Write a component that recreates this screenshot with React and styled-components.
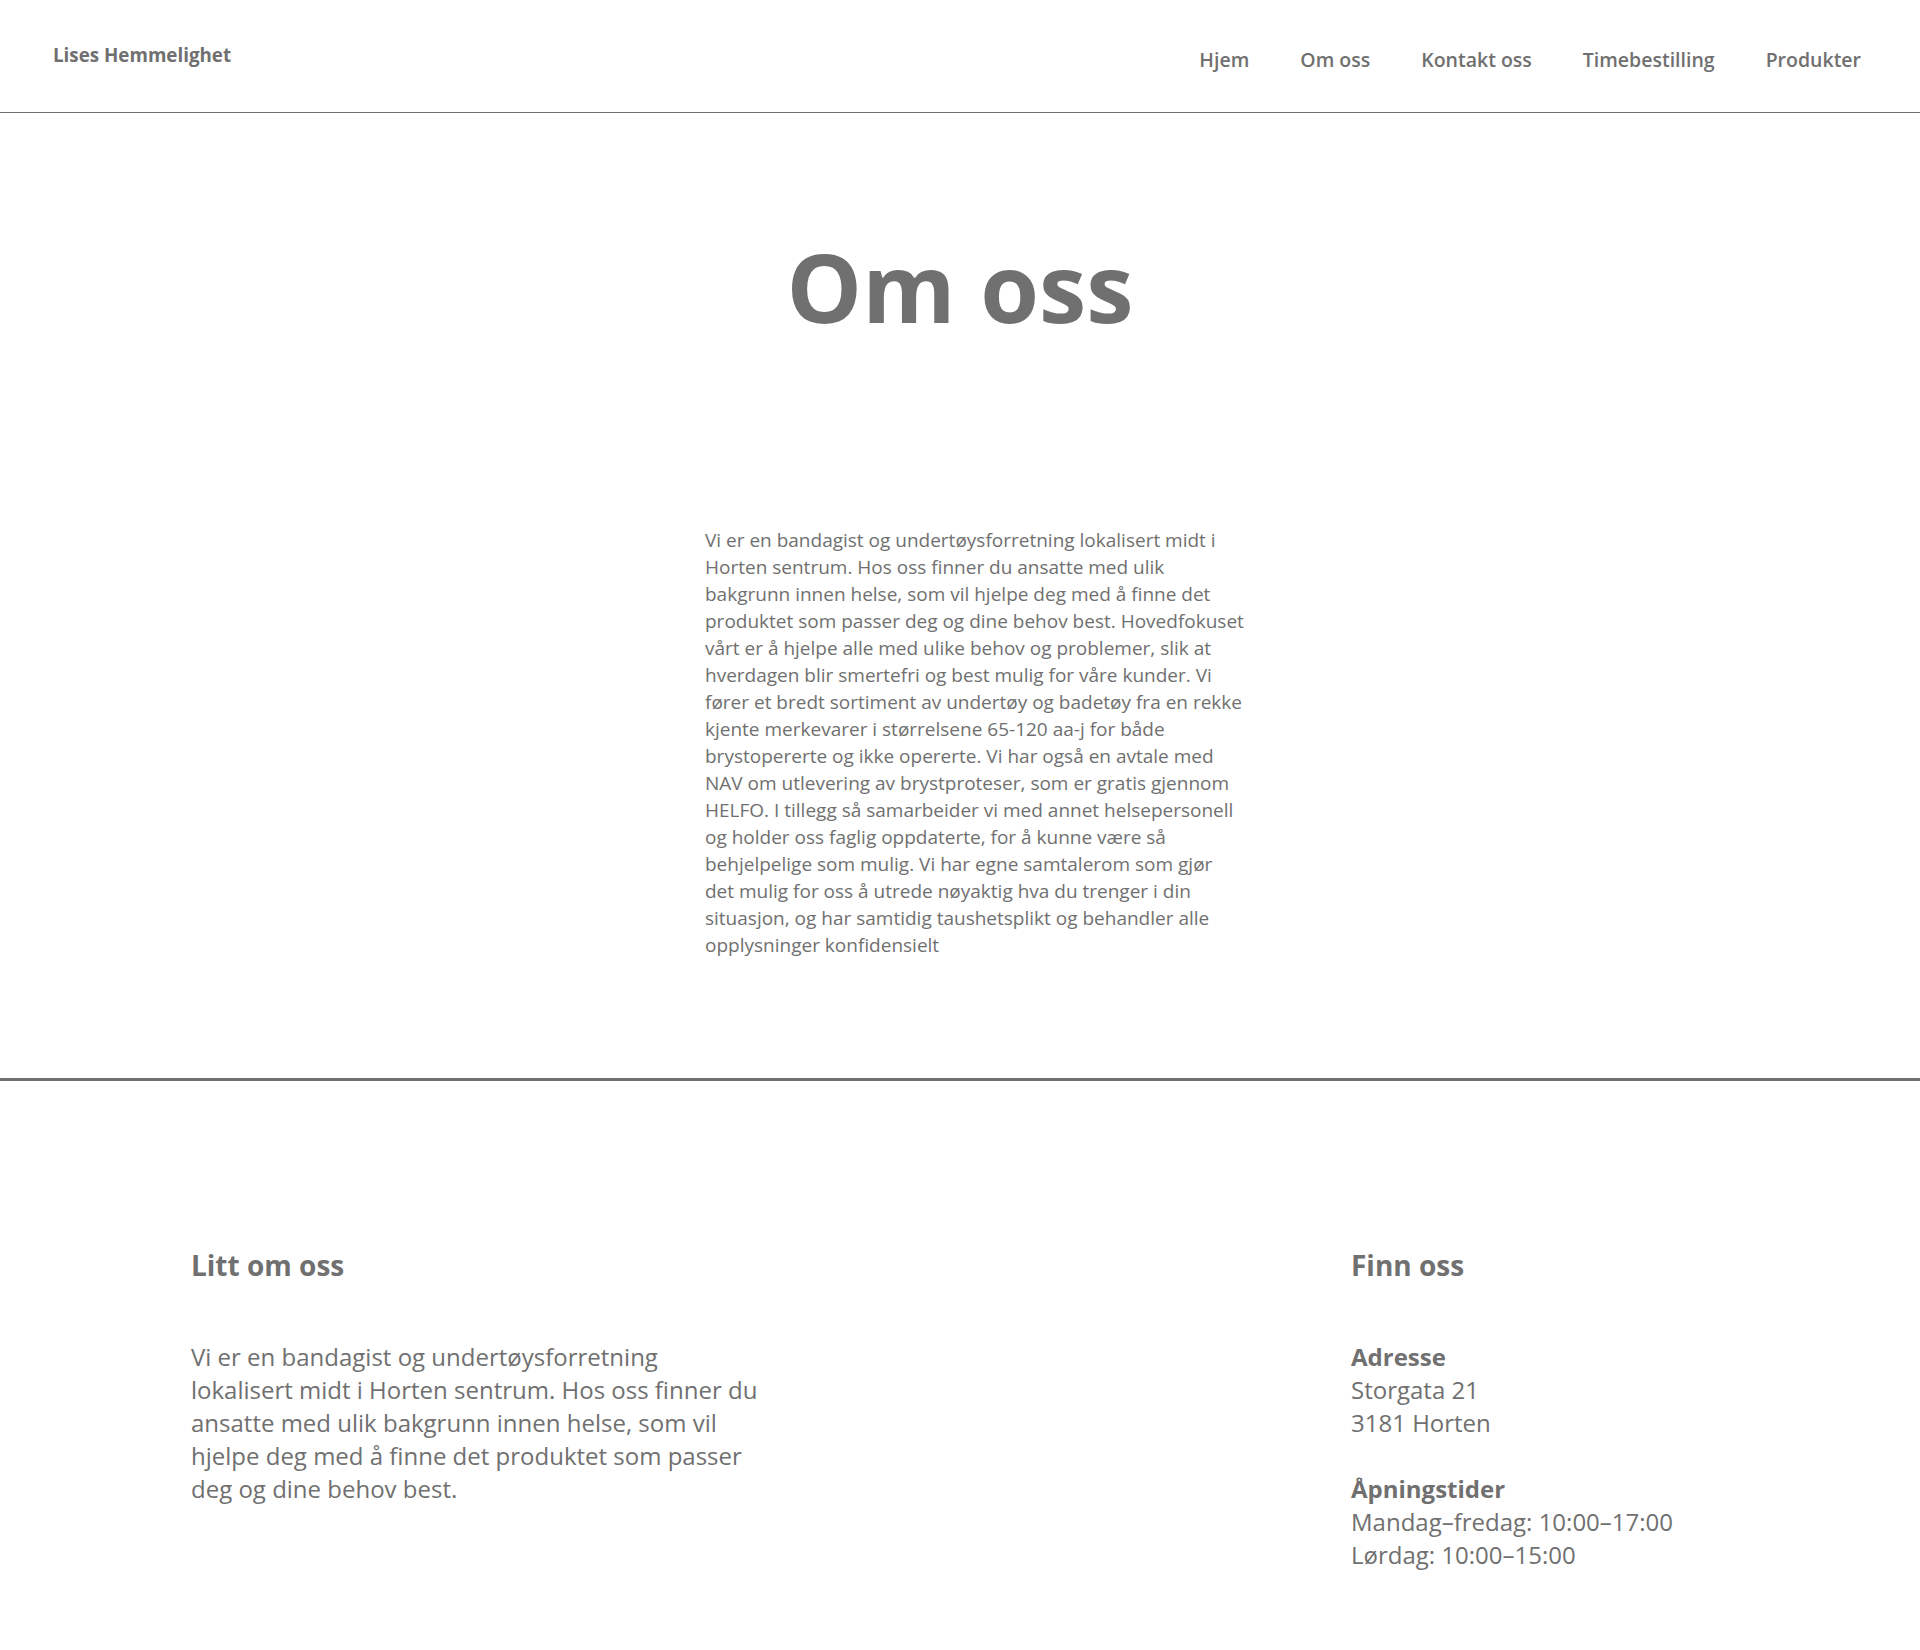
import React from "react";
import styled, { createGlobalStyle } from "styled-components";

const GlobalStyle = createGlobalStyle`
  html, body {
    margin: 0;
    padding: 0;
    background: #ffffff;
  }
  body {
    font-family: "Open Sans", "Noto Sans", "Liberation Sans", sans-serif;
    color: #707070;
  }
  * { box-sizing: border-box; }
`;

const Page = styled.div`
  width: 1920px;
  min-height: 1650px;
  background: #fff;
`;

const Header = styled.header`
  height: 113px;
  display: flex;
  justify-content: space-between;
  align-items: flex-start;
  padding: 0 59px 0 53px;
  border-bottom: 1px solid #707070;
`;

const Logo = styled.a`
  margin-top: 44px;
  font-size: 18.8px;
  line-height: 1.2;
  font-weight: 700;
  color: #707070;
  text-decoration: none;
`;

const Nav = styled.nav`
  display: flex;
  gap: 51px;
  margin-top: 48px;
`;

const NavLink = styled.a`
  font-size: 19.5px;
  line-height: 24px;
  font-weight: 600;
  color: #707070;
  text-decoration: none;
`;

const Main = styled.main`
  padding: 123px 0 119px;
  border-bottom: 3px solid #707070;
`;

const Title = styled.h1`
  margin: 0;
  text-align: center;
  font-size: 95px;
  line-height: 100px;
  font-weight: 700;
  color: #707070;
`;

const Intro = styled.p`
  margin: 191px 0 0 calc(50% - 255px);
  width: 545px;
  font-size: 19px;
  line-height: 27px;
  color: #707070;
`;

const Footer = styled.footer`
  display: grid;
  grid-template-columns: 570px 590px auto;
  padding: 168px 0 60px 191px;
`;

const Column = styled.section`
  grid-column: ${(p) => p.$col};
  display: flex;
  flex-direction: column;
`;

const ColumnTitle = styled.h2`
  margin: 0 0 57px;
  font-size: 28px;
  line-height: 1.2;
  font-weight: 700;
  color: #707070;
`;

const FooterText = styled.p`
  margin: 0 0 ${(p) => (p.$gap ? "33px" : "0")};
  font-size: 24px;
  line-height: 33px;
  color: #707070;
`;

const Label = styled.strong`
  font-weight: 700;
`;

const navItems = ["Hjem", "Om oss", "Kontakt oss", "Timebestilling", "Produkter"];

const introText =
  "Vi er en bandagist og undertøysforretning lokalisert midt i Horten sentrum. " +
  "Hos oss finner du ansatte med ulik bakgrunn innen helse, som vil hjelpe deg " +
  "med å finne det produktet som passer deg og dine behov best. Hovedfokuset vårt " +
  "er å hjelpe alle med ulike behov og problemer, slik at hverdagen blir smertefri " +
  "og best mulig for våre kunder. Vi fører et bredt sortiment av undertøy og badetøy " +
  "fra en rekke kjente merkevarer i størrelsene 65-120 aa-j for både brystopererte " +
  "og ikke opererte. Vi har også en avtale med NAV om utlevering av brystproteser, " +
  "som er gratis gjennom HELFO. I tillegg så samarbeider vi med annet helsepersonell " +
  "og holder oss faglig oppdaterte, for å kunne være så behjelpelige som mulig. " +
  "Vi har egne samtalerom som gjør det\u00A0mulig for oss å utrede nøyaktig hva du " +
  "trenger i din situasjon, og har samtidig taushetsplikt og behandler alle " +
  "opplysninger konfidensielt";

const aboutText =
  "Vi er en bandagist og undertøysforretning lokalisert midt i Horten sentrum. " +
  "Hos oss finner du ansatte med ulik bakgrunn innen helse, som vil hjelpe deg " +
  "med å finne det produktet som passer deg og dine behov best.";

export default function App() {
  return (
    <Page>
      <GlobalStyle />
      <Header>
        <Logo href="#">Lises Hemmelighet</Logo>
        <Nav>
          {navItems.map((item) => (
            <NavLink key={item} href="#">
              {item}
            </NavLink>
          ))}
        </Nav>
      </Header>
      <Main>
        <Title>Om oss</Title>
        <Intro>{introText}</Intro>
      </Main>
      <Footer>
        <Column $col={1}>
          <ColumnTitle>Litt om oss</ColumnTitle>
          <FooterText>{aboutText}</FooterText>
        </Column>
        <Column $col={3}>
          <ColumnTitle>Finn oss</ColumnTitle>
          <FooterText $gap>
            <Label>Adresse</Label>
            <br />
            Storgata 21
            <br />
            3181 Horten
          </FooterText>
          <FooterText>
            <Label>Åpningstider</Label>
            <br />
            Mandag–fredag: 10:00–17:00
            <br />
            Lørdag: 10:00–15:00
          </FooterText>
        </Column>
      </Footer>
    </Page>
  );
}
